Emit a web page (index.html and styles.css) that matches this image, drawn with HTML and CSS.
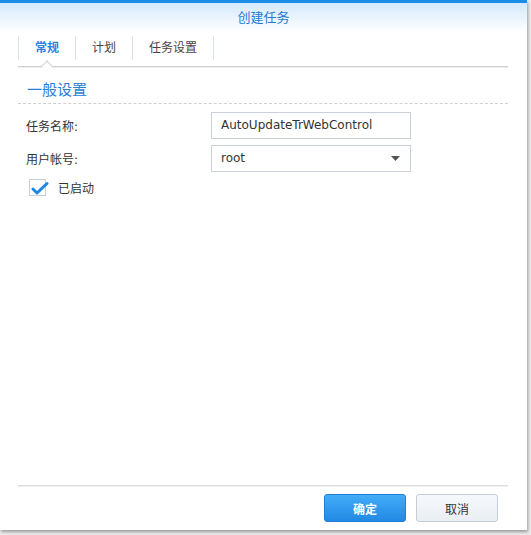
FILE: index.html
```html
<!DOCTYPE html>
<html lang="zh-CN">
<head>
<meta charset="utf-8">
<title>创建任务</title>
<link rel="stylesheet" href="styles.css">
</head>
<body>
<div class="dialog">
  <div class="topbar"></div>
  <div class="header">创建任务</div>
  <div class="tabs">
    <div class="tab active">常规</div>
    <div class="tab">计划</div>
    <div class="tab">任务设置</div>
  </div>
  <div class="content">
    <div class="section-title">一般设置</div>
    <div class="form-row">
      <label class="label">任务名称:</label>
      <div class="field">AutoUpdateTrWebControl</div>
    </div>
    <div class="form-row">
      <label class="label">用户帐号:</label>
      <div class="field select">
        <span>root</span>
        <svg class="arrow" width="9" height="5" viewBox="0 0 9 5"><path d="M0 0H9L4.5 5Z" fill="#555"/></svg>
      </div>
    </div>
    <div class="check-row">
      <span class="checkbox">
        <svg class="tick" width="19" height="15" viewBox="0 0 19 15"><path d="M3 8L7 12L17 2.5" fill="none" stroke="#1f86e0" stroke-width="3" stroke-linecap="round" stroke-linejoin="round"/></svg>
      </span>
      <span class="check-label">已启动</span>
    </div>
  </div>
  <div class="footer">
    <button class="btn primary">确定</button>
    <button class="btn">取消</button>
  </div>
</div>
</body>
</html>
```

FILE: styles.css
```css
html, body {
  margin: 0;
  padding: 0;
}
body {
  background: #ececec;
  width: 531px;
  height: 535px;
  overflow: hidden;
  font-family: "DejaVu Sans", "Noto Sans CJK SC", sans-serif;
  font-size: 12px;
  color: #333;
}
.dialog {
  width: 527px;
  height: 530px;
  background: #fff;
  display: flex;
  flex-direction: column;
  box-shadow: 1px 2px 3px rgba(0,0,0,0.35);
}
.topbar {
  height: 3px;
  background: #1a8ee6;
}
.header {
  height: 30px;
  line-height: 30px;
  text-align: center;
  font-size: 13px;
  color: #1f7bd6;
  background: linear-gradient(#d6e9fa, #ffffff);
}
.tabs {
  margin: 0 19px 0 18px;
  padding-top: 3px;
  height: 30px;
  display: flex;
  align-items: flex-start;
  border-bottom: 1px solid #cfcfcf;
  box-shadow: 0 1px 0 #ececec;
}
.tab {
  position: relative;
  height: 24px;
  line-height: 24px;
  padding: 0 16px;
  border-right: 1px solid #dbe1e8;
  color: #444;
}
.tab:first-child {
  border-left: 1px solid #dbe1e8;
}
.tab.active {
  color: #2a84e0;
  font-weight: bold;
}
.tab.active::after {
  content: "";
  position: absolute;
  left: 24px;
  bottom: -10px;
  width: 7px;
  height: 7px;
  background: #fff;
  border-top: 1px solid #cfcfcf;
  border-left: 1px solid #cfcfcf;
  transform: rotate(45deg);
}
.content {
  flex: 1;
  margin: 0 19px 0 18px;
}
.section-title {
  margin-top: 13px;
  padding: 0 0 3px 9px;
  line-height: 20px;
  font-size: 15px;
  color: #2a7fd8;
  border-bottom: 1px dashed #d0d0d0;
}
.form-row {
  display: flex;
  align-items: center;
  margin-top: 8px;
}
.form-row + .form-row {
  margin-top: 6px;
}
.label {
  width: 185px;
  padding-left: 8px;
  color: #333;
}
.field {
  box-sizing: border-box;
  width: 200px;
  height: 27px;
  line-height: 25px;
  border: 1px solid #c9d0d7;
  padding: 0 9px;
  color: #333;
  font-size: 12px;
}
.select {
  display: flex;
  justify-content: space-between;
  align-items: center;
}
.arrow {
  margin-right: 1px;
}
.check-row {
  display: flex;
  align-items: center;
  margin-top: 7px;
  padding-left: 11px;
}
.checkbox {
  position: relative;
  box-sizing: border-box;
  width: 17px;
  height: 17px;
  border: 1px solid #c6cdd4;
  background: #fff;
}
.tick {
  position: absolute;
  left: 0px;
  top: 1px;
}
.check-label {
  margin-left: 12px;
  color: #333;
}
.footer {
  margin: 0 19px 0 18px;
  border-top: 1px solid #dcdcdc;
  box-shadow: inset 0 1px 0 #f0f0f0;
  padding: 8px 10px 8px 0;
  display: flex;
  justify-content: flex-end;
  gap: 10px;
}
.btn {
  width: 82px;
  height: 28px;
  border-radius: 3px;
  border: 1px solid #c5ced7;
  background: linear-gradient(#f6f9fc, #e9eef3);
  color: #333;
  font-family: "DejaVu Sans", "Noto Sans CJK SC", sans-serif;
  font-size: 12px;
  padding: 0;
}
.btn.primary {
  border-color: #1e80d6;
  background: linear-gradient(#43acf8, #2189e3);
  color: #fff;
  font-weight: bold;
}
```
